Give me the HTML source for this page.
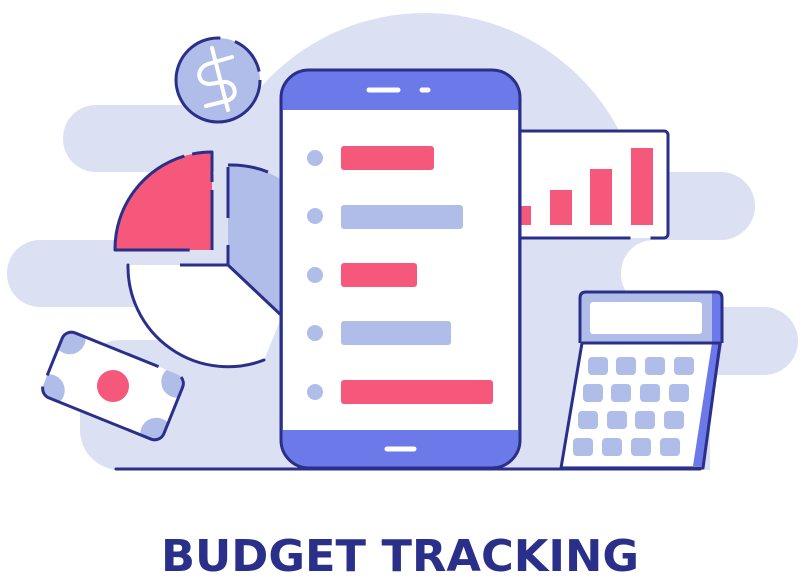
<!DOCTYPE html>
<html><head><style>html,body{margin:0;padding:0;background:#fff;width:806px;height:581px;overflow:hidden}</style></head>
<body>
<svg width="806" height="581" viewBox="0 0 806 581" xmlns="http://www.w3.org/2000/svg">
<defs><clipPath id="mc"><rect x="-65" y="-35" width="130" height="70" rx="10"/></clipPath></defs>
<g fill="#dce0f3">
<circle cx="425" cy="232" r="219"/>
<rect x="63" y="105" width="300" height="67" rx="33"/>
<rect x="7" y="240" width="300" height="67" rx="33"/>
<rect x="480" y="172" width="275" height="68" rx="34"/>
<rect x="480" y="307" width="318" height="68" rx="34"/>
<rect x="480" y="240" width="180" height="67"/>
<rect x="621" y="240" width="150" height="67" rx="33" fill="#fff"/>
<rect x="480" y="240" width="141" height="230"/>
<rect x="600" y="300" width="110" height="170"/>
<rect x="80" y="340" width="240" height="130" rx="40"/>
</g>
<circle cx="218" cy="80" r="42" fill="#b0bde9"/>
<circle cx="218" cy="80" r="42" fill="none" stroke="#2a2f8a" stroke-width="3" stroke-dasharray="200 15 40 10"/>
<g stroke="#fff" stroke-width="4" fill="none" stroke-linecap="round">
<path d="M232 57 L208 64 C196 68 196 84 210 84 L222 82 C236 80 240 98 226 101 L206 106"/>
<line x1="212" y1="48" x2="228" y2="110"/>
</g>
<path d="M212 250 L212 152 A97 97 0 0 0 115 250 Z" fill="#f5587a" stroke="#2a2f8a" stroke-width="3" stroke-linejoin="round" stroke-dasharray="60 8 50 8 200"/>
<path d="M228 165 A100 100 0 0 1 285 182 L285 318 L228 265 Z" fill="#b0bde9"/>
<path d="M228 165 A100 100 0 0 1 268 172" fill="none" stroke="#2a2f8a" stroke-width="3"/>
<line x1="228" y1="167" x2="228" y2="218" stroke="#2a2f8a" stroke-width="3"/>
<line x1="228" y1="245" x2="228" y2="265" stroke="#2a2f8a" stroke-width="3"/>
<path d="M128 265 A100 100 0 0 0 264 360 L282 316 L228 265 Z" fill="#fff"/>
<path d="M228 265 L282 316" stroke="#2a2f8a" stroke-width="3"/>
<path d="M128 265 A100 100 0 0 0 264 360" fill="none" stroke="#2a2f8a" stroke-width="3" stroke-linecap="round"/>
<line x1="180" y1="265" x2="228" y2="265" stroke="#2a2f8a" stroke-width="3"/>
<g transform="translate(113 386) rotate(22)">
<rect x="-65" y="-35" width="130" height="70" rx="10" fill="#fff"/>
<g clip-path="url(#mc)" fill="#b0bde9">
<circle cx="-58" cy="-28" r="16"/><circle cx="58" cy="-28" r="16"/>
<circle cx="-58" cy="28" r="16"/><circle cx="58" cy="28" r="16"/>
</g>
<rect x="-65" y="-35" width="130" height="70" rx="10" fill="none" stroke="#2a2f8a" stroke-width="3" stroke-dasharray="90 25 200 12"/>
<circle cx="0" cy="0" r="16" fill="#f5587a"/>
</g>
<rect x="500" y="131" width="168" height="107" rx="4" fill="#fff" stroke="#2a2f8a" stroke-width="3" stroke-dasharray="285 20 300"/>
<g fill="#f5587a">
<rect x="520" y="206" width="11" height="19"/><rect x="550" y="190" width="22" height="35"/>
<rect x="590" y="169" width="22" height="56"/><rect x="631" y="148" width="22" height="77"/>
</g>
<rect x="281" y="70" width="239" height="398" rx="28" fill="#6b7ae8"/>
<rect x="283" y="110" width="235" height="320" fill="#fff"/>
<rect x="281" y="70" width="239" height="398" rx="28" fill="none" stroke="#2a2f8a" stroke-width="3"/>
<line x1="369" y1="90" x2="398" y2="90" stroke="#fff" stroke-width="5" stroke-linecap="round"/>
<line x1="422" y1="90" x2="428" y2="90" stroke="#fff" stroke-width="5" stroke-linecap="round"/>
<line x1="387" y1="449" x2="414" y2="449" stroke="#fff" stroke-width="5" stroke-linecap="round"/>
<g fill="#b0bde9"><circle cx="315" cy="158" r="8"/><circle cx="315" cy="216" r="8"/><circle cx="315" cy="275" r="8"/><circle cx="315" cy="333" r="8"/><circle cx="315" cy="392" r="8"/></g>
<rect x="341" y="146" width="93" height="24" rx="3" fill="#f5587a"/>
<rect x="341" y="205" width="122" height="24" rx="3" fill="#b0bde9"/>
<rect x="341" y="263" width="76" height="24" rx="3" fill="#f5587a"/>
<rect x="341" y="321" width="110" height="24" rx="3" fill="#b0bde9"/>
<rect x="341" y="380" width="152" height="24" rx="3" fill="#f5587a"/>
<path d="M586 292 L716 292 Q722 292 722 298 L722 343 L703 466 L562 466 L582 343 L580 298 Q580 292 586 292 Z" fill="#b0bde9"/>
<path d="M582 343 L720 343 L702 466 L562 466 Z" fill="#fff"/>
<path d="M712 343 L722 343 L703 466 L693 466 Z" fill="#6b7ae8"/>
<path d="M716 292 Q722 292 722 298 L722 343 L712 343 L712 292 Z" fill="#6b7ae8"/>
<rect x="590" y="302" width="112" height="32" rx="3" fill="#fff"/>
<path d="M582 343 L720 343 L703 468 L561 468 Z M580 343 L580 298 Q580 292 586 292 L716 292 Q722 292 722 298 L722 343" fill="none" stroke="#2a2f8a" stroke-width="3" stroke-linejoin="round"/>
<g fill="#b0bde9">
<rect x="588" y="357" width="20" height="18" rx="4"/><rect x="616" y="357" width="20" height="18" rx="4"/><rect x="645" y="357" width="20" height="18" rx="4"/><rect x="674" y="357" width="20" height="18" rx="4"/>
<rect x="583" y="384" width="20" height="18" rx="4"/><rect x="611" y="384" width="20" height="18" rx="4"/><rect x="640" y="384" width="20" height="18" rx="4"/><rect x="669" y="384" width="20" height="18" rx="4"/>
<rect x="578" y="411" width="20" height="18" rx="4"/><rect x="607" y="411" width="20" height="18" rx="4"/><rect x="635" y="411" width="20" height="18" rx="4"/><rect x="664" y="411" width="20" height="18" rx="4"/>
<rect x="573" y="438" width="20" height="18" rx="4"/><rect x="602" y="438" width="20" height="18" rx="4"/><rect x="631" y="438" width="20" height="18" rx="4"/><rect x="660" y="438" width="20" height="18" rx="4"/>
</g>
<line x1="116" y1="469" x2="700" y2="469" stroke="#2a2f8a" stroke-width="3" stroke-linecap="round"/>
<text x="161" y="571" font-family="DejaVu Sans, sans-serif" font-weight="bold" font-size="44" fill="#2a2f8a" textLength="478" lengthAdjust="spacingAndGlyphs">BUDGET TRACKING</text>
</svg>
</body></html>
